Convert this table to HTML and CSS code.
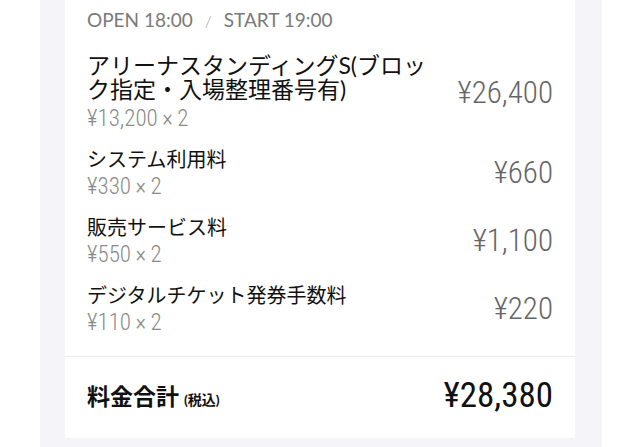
FILE: index.html
```html
<!DOCTYPE html>
<html lang="ja">
<head>
<meta charset="utf-8">
<title>料金明細</title>
<link rel="stylesheet" href="styles.css">
</head>
<body>
<div class="panel">
  <div class="card">
    <div class="items">
      <div class="time">OPEN 18:00<span class="slash">/</span>START 19:00</div>
      <div class="row">
        <div class="info">
          <div class="name title">アリーナスタンディングS(ブロック指定・入場整理番号有)</div>
          <div class="sub num">¥13,200&thinsp;×&thinsp;2</div>
        </div>
        <div class="price num">¥26,400</div>
      </div>
      <div class="row">
        <div class="info">
          <div class="name">システム利用料</div>
          <div class="sub num">¥330&thinsp;×&thinsp;2</div>
        </div>
        <div class="price num">¥660</div>
      </div>
      <div class="row">
        <div class="info">
          <div class="name">販売サービス料</div>
          <div class="sub num">¥550&thinsp;×&thinsp;2</div>
        </div>
        <div class="price num">¥1,100</div>
      </div>
      <div class="row">
        <div class="info">
          <div class="name">デジタルチケット発券手数料</div>
          <div class="sub num">¥110&thinsp;×&thinsp;2</div>
        </div>
        <div class="price num">¥220</div>
      </div>
    </div>
    <div class="total">
      <div class="total-label">料金合計<span class="tax">(税込)</span></div>
      <div class="total-price num">¥28,380</div>
    </div>
  </div>
</div>
</body>
</html>
```

FILE: styles.css
```css
html, body {
  margin: 0;
  padding: 0;
  background: #ffffff;
}

body {
  font-family: Lato, "Noto Sans CJK JP", sans-serif;
  color: #111111;
}

.panel {
  margin: 0 38px 0 40px;
  padding: 0 27px 9px 25px;
  background: #f5f5f9;
}

.card {
  background: #ffffff;
}

.items {
  padding: 8px 22px 19px 22px;
  display: flex;
  flex-direction: column;
  gap: 12px;
  border-bottom: 1px solid #ececec;
}

.time {
  font-size: 19px;
  line-height: 24px;
  color: #7a7a7a;
  margin-bottom: 8px;
}

.slash {
  display: inline-block;
  margin: 0 12px;
  font-size: 16px;
  font-weight: 300;
  color: #999999;
}

.row {
  display: flex;
  align-items: center;
  justify-content: space-between;
  gap: 8px;
}

.info {
  display: flex;
  flex-direction: column;
  flex: 1 1 auto;
  min-width: 0;
}

.name {
  font-size: 20px;
  line-height: 28px;
  color: #111111;
}

.name.title {
  font-size: 23px;
  line-height: 24px;
  max-width: 360px;
  margin-bottom: 4px;
}

.num {
  font-family: "Roboto Condensed", Roboto, "DejaVu Sans Condensed", sans-serif;
  font-stretch: condensed;
}

.sub {
  font-size: 23px;
  line-height: 28px;
  font-weight: 300;
  color: #8a8a8a;
}

.price {
  flex: 0 0 auto;
  font-size: 31px;
  line-height: 36px;
  font-weight: 300;
  color: #666666;
  white-space: nowrap;
}

.total {
  display: flex;
  align-items: center;
  justify-content: space-between;
  padding: 17px 22px 20px 22px;
}

.total-label {
  font-size: 23px;
  line-height: 44px;
  height: 44px;
  font-weight: 700;
  color: #111111;
}

.tax {
  font-size: 14px;
  line-height: 1;
  margin-left: 5px;
}

.total-price {
  font-size: 35px;
  line-height: 44px;
  height: 44px;
  font-weight: 400;
  color: #111111;
}
```
